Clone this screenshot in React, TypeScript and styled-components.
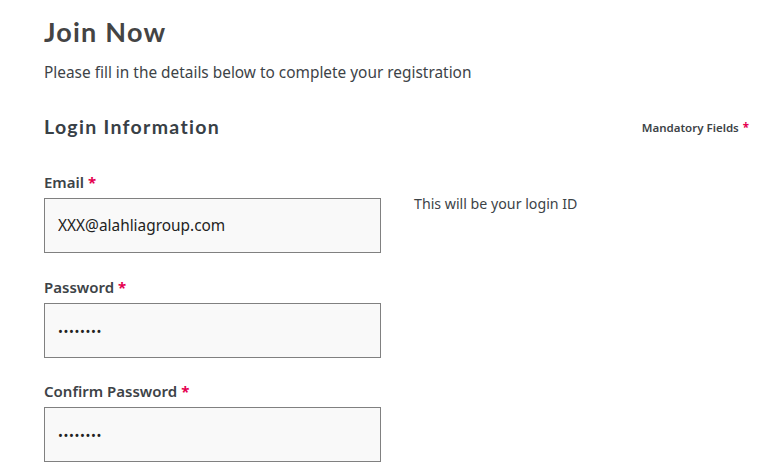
import React from "react";
import styled, { createGlobalStyle } from "styled-components";

const GlobalStyle = createGlobalStyle`
  html, body { margin: 0; padding: 0; background: #ffffff; }
  body { font-family: "Noto Sans", "Open Sans", sans-serif; color: #3d4347; }
  * { box-sizing: border-box; }
`;

const Page = styled.div`
  width: 778px;
  height: 472px;
  overflow: hidden;
  padding: 16px 28px 0 44px;
`;

const Title = styled.h1`
  margin: 0;
  font-family: "Lato", sans-serif;
  font-weight: 700;
  font-size: 27px;
  line-height: 32px;
  color: #444444;
  letter-spacing: 1.2px;
`;

const Subtitle = styled.p`
  margin: 15px 0 0;
  font-size: 15.4px;
  line-height: 20px;
  color: #3d4347;
`;

const SectionHeader = styled.div`
  display: flex;
  justify-content: space-between;
  align-items: center;
  margin-top: 31px;
`;

const SectionTitle = styled.h2`
  margin: 0;
  font-family: "Lato", sans-serif;
  font-weight: 700;
  font-size: 19.5px;
  line-height: 26px;
  color: #384046;
  letter-spacing: 1.3px;
`;

const Mandatory = styled.span`
  font-size: 11.5px;
  font-weight: 600;
  color: #3d4347;
  padding-right: 1px;
`;

const Star = styled.span`
  color: #e5004f;
  font-weight: 700;
  margin-left: 4px;
`;

const Field = styled.div<{ $top: number }>`
  margin-top: ${(p) => p.$top}px;
  display: flex;
  flex-direction: column;
`;

const Label = styled.label`
  font-size: 15px;
  font-weight: 600;
  line-height: 20px;
  color: #3d4347;
`;

const Row = styled.div`
  display: flex;
  align-items: flex-start;
  margin-top: 6px;
`;

const Input = styled.input`
  width: 337px;
  height: 55px;
  border: 1px solid #808080;
  background: #f9f9f9;
  padding: 0 13px;
  font-family: "Noto Sans", sans-serif;
  font-size: 15.4px;
  color: #222222;
  outline: none;
  &[type="password"] {
    font-size: 13px;
    letter-spacing: 0.6px;
  }
`;

const Hint = styled.span`
  margin-left: 33px;
  margin-top: -1px;
  font-size: 14.2px;
  line-height: 14px;
  color: #3d4347;
`;

export default function App() {
  return (
    <>
      <GlobalStyle />
      <Page>
        <Title>Join Now</Title>
        <Subtitle>Please fill in the details below to complete your registration</Subtitle>
        <SectionHeader>
          <SectionTitle>Login Information</SectionTitle>
          <Mandatory>
            Mandatory Fields<Star>*</Star>
          </Mandatory>
        </SectionHeader>
        <Field $top={32}>
          <Label>
            Email<Star>*</Star>
          </Label>
          <Row>
            <Input type="text" defaultValue="XXX@alahliagroup.com" />
            <Hint>This will be your login ID</Hint>
          </Row>
        </Field>
        <Field $top={24}>
          <Label>
            Password<Star>*</Star>
          </Label>
          <Row>
            <Input type="password" defaultValue="12345678" />
          </Row>
        </Field>
        <Field $top={23}>
          <Label>
            Confirm Password<Star>*</Star>
          </Label>
          <Row>
            <Input type="password" defaultValue="12345678" />
          </Row>
        </Field>
      </Page>
    </>
  );
}
